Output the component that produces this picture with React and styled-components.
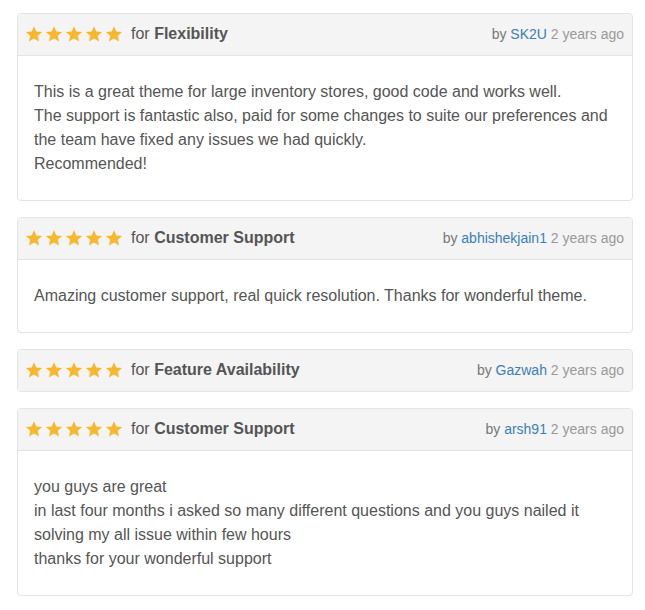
import styled, { createGlobalStyle } from 'styled-components';

const GlobalStyle = createGlobalStyle`
    body {
        margin: 0;
        background: #fff;
        font-family: "Liberation Sans", Arial, sans-serif;
        font-size: 16px;
        color: #555;
    }
`;

const Page = styled.div`
    padding: 13px 12px 14px 17px;
    display: flex;
    flex-direction: column;
    gap: 16px;
`;
const Card = styled.div`
    border: 1px solid #e1e4e8;
    border-radius: 4px;
    background: #fff;
    overflow: hidden;
`;
const Head = styled.div`
    display: flex;
    align-items: center;
    justify-content: space-between;
    background: #f4f4f4;
    padding: 8px 8px 9px 7px;
    line-height: 24px;
    border-bottom: ${props => props.$alone ? 'none' : '1px solid #e1e4e8'};
`;
const Left = styled.div`
    display: flex;
    align-items: center;
`;
const Stars = styled.span`
    display: flex;
    gap: 2px;
    margin-right: 8px;
`;
const Topic = styled.span`
    color: #555;
    > b {
        font-weight: bold;
    }
`;
const Meta = styled.span`
    font-size: 14px;
    color: #777;
    > a {
        color: #3a7fb8;
        text-decoration: none;
    }
    > em {
        font-style: normal;
        color: #999;
    }
`;
const Body = styled.div`
    padding: 24px 16px;
    line-height: 24px;
    color: #555;
`;

const Star = () => (
    <svg width="18" height="18" viewBox="0 0 24 24">
        <path fill="#f5b82e" d="M12 1.5l3.1 7.2 7.8.6-5.9 5.1 1.8 7.6L12 18l-6.8 4 1.8-7.6-5.9-5.1 7.8-.6z" />
    </svg>
);

const reviews = [
    {
        topic: 'Flexibility',
        user: 'SK2U',
        lines: [
            'This is a great theme for large inventory stores, good code and works well.',
            'The support is fantastic also, paid for some changes to suite our preferences and the team have fixed any issues we had quickly.',
            'Recommended!',
        ],
    },
    {
        topic: 'Customer Support',
        user: 'abhishekjain1',
        lines: ['Amazing customer support, real quick resolution. Thanks for wonderful theme.'],
    },
    { topic: 'Feature Availability', user: 'Gazwah', lines: [] },
    {
        topic: 'Customer Support',
        user: 'arsh91',
        lines: [
            'you guys are great',
            'in last four months i asked so many different questions and you guys nailed it solving my all issue within few hours',
            'thanks for your wonderful support',
        ],
    },
];

const Review = ({ item }) => {
    const alone = item.lines.length === 0;
    return (
        <Card>
            <Head $alone={alone}>
                <Left>
                    <Stars>
                        {[0, 1, 2, 3, 4].map(i => <Star key={i} />)}
                    </Stars>
                    <Topic>for <b>{item.topic}</b></Topic>
                </Left>
                <Meta>by <a href="#">{item.user}</a> <em>2 years ago</em></Meta>
            </Head>
            {!alone && (
                <Body>
                    {item.lines.map((l, i) => <div key={i}>{l}</div>)}
                </Body>
            )}
        </Card>
    );
};

const App = () => {
    return (
        <>
            <GlobalStyle />
            <Page>
                {reviews.map((r, i) => <Review key={i} item={r} />)}
            </Page>
        </>
    );
};

export default App;
